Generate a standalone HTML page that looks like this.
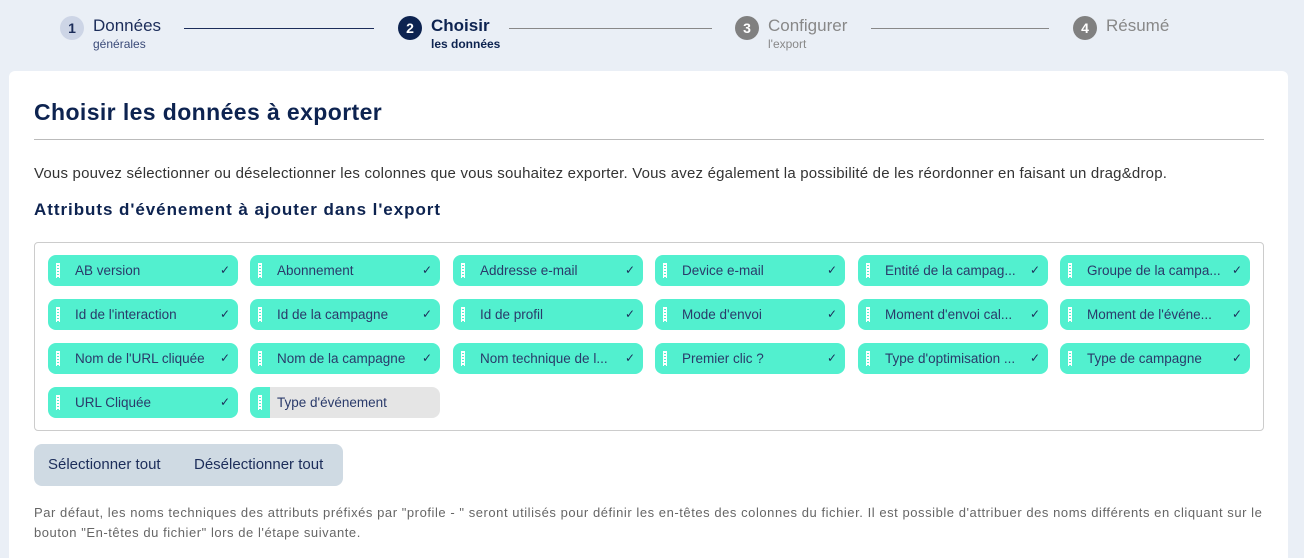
<!DOCTYPE html>
<html style="overflow:hidden"><head><meta charset="utf-8"><style>
*{margin:0;padding:0;box-sizing:border-box}
html,body{width:1304px;height:558px;overflow:hidden}
body{background:#eaeff6;font-family:"Liberation Sans",sans-serif;color:#1c2d5a;position:relative}
.a{position:absolute;white-space:nowrap}
.circ{position:absolute;width:24px;height:24px;border-radius:50%;font-weight:bold;font-size:14px;text-align:center;line-height:24px}
.card{position:absolute;left:9px;top:71px;width:1279px;height:487px;background:#fff;border-radius:6px 6px 0 0}
.chip{position:absolute;width:190px;height:31px;border-radius:8px;background:#52f0cf;font-size:13.5px;color:#2a3a6a;line-height:31px;padding-left:27px;overflow:hidden}
.chip .g{position:absolute;left:8px;top:8px;width:4px;height:15px;background:repeating-linear-gradient(#fff 0 2px,transparent 2px 3px);border-left:1px solid #fff;border-right:1px solid #fff;background-clip:content-box}
.chip .c{position:absolute;right:8px;top:0;font-size:12px;color:#1c2d5a}
.chip.off{background:linear-gradient(90deg,#52f0cf 0 20px,#e5e5e5 20px)}
</style></head><body>
<div class="circ" style="left:60px;top:16px;background:#cdd5e6;color:#1c2d5a">1</div>
<div class="a" style="left:93px;top:16px;font-size:17px;color:#1c2d5a">Données</div>
<div class="a" style="left:93px;top:37px;font-size:12px;color:#3a4a78">générales</div>
<div class="a" style="left:184px;top:28px;width:190px;height:1px;background:#1c2d5a"></div>
<div class="circ" style="left:398px;top:16px;background:#0d2350;color:#fff">2</div>
<div class="a" style="left:431px;top:16px;font-size:17px;font-weight:bold;color:#0d2350">Choisir</div>
<div class="a" style="left:431px;top:37px;font-size:12px;font-weight:bold;color:#0d2350">les données</div>
<div class="a" style="left:509px;top:28px;width:203px;height:1px;background:#888"></div>
<div class="circ" style="left:735px;top:16px;background:#808080;color:#fff">3</div>
<div class="a" style="left:768px;top:16px;font-size:17px;color:#888">Configurer</div>
<div class="a" style="left:768px;top:37px;font-size:12px;color:#888">l'export</div>
<div class="a" style="left:871px;top:28px;width:178px;height:1px;background:#888"></div>
<div class="circ" style="left:1073px;top:16px;background:#808080;color:#fff">4</div>
<div class="a" style="left:1106px;top:16px;font-size:17px;color:#888">Résumé</div>

<div class="card"></div>
<div class="a" style="left:34px;top:99px;font-size:23px;font-weight:bold;color:#0d2350;letter-spacing:0.4px">Choisir les données à exporter</div>
<div class="a" style="left:34px;top:139px;width:1230px;height:1px;background:#bbb"></div>
<div class="a" style="left:34px;top:165px;font-size:15px;color:#333;letter-spacing:0.2px">Vous pouvez sélectionner ou déselectionner les colonnes que vous souhaitez exporter. Vous avez également la possibilité de les réordonner en faisant un drag&amp;drop.</div>
<div class="a" style="left:34px;top:200px;font-size:17px;font-weight:bold;color:#0d2350;letter-spacing:0.95px">Attributs d'événement à ajouter dans l'export</div>
<div class="a" style="left:34px;top:242px;width:1230px;height:189px;border:1px solid #ccc;border-radius:4px"></div>

<div class="chip" style="left:48px;top:255px"><span class="g"></span>AB version<span class="c">✓</span></div>
<div class="chip" style="left:250px;top:255px"><span class="g"></span>Abonnement<span class="c">✓</span></div>
<div class="chip" style="left:453px;top:255px"><span class="g"></span>Addresse e-mail<span class="c">✓</span></div>
<div class="chip" style="left:655px;top:255px"><span class="g"></span>Device e-mail<span class="c">✓</span></div>
<div class="chip" style="left:858px;top:255px"><span class="g"></span>Entité de la campag...<span class="c">✓</span></div>
<div class="chip" style="left:1060px;top:255px"><span class="g"></span>Groupe de la campa...<span class="c">✓</span></div>
<div class="chip" style="left:48px;top:299px"><span class="g"></span>Id de l'interaction<span class="c">✓</span></div>
<div class="chip" style="left:250px;top:299px"><span class="g"></span>Id de la campagne<span class="c">✓</span></div>
<div class="chip" style="left:453px;top:299px"><span class="g"></span>Id de profil<span class="c">✓</span></div>
<div class="chip" style="left:655px;top:299px"><span class="g"></span>Mode d'envoi<span class="c">✓</span></div>
<div class="chip" style="left:858px;top:299px"><span class="g"></span>Moment d'envoi cal...<span class="c">✓</span></div>
<div class="chip" style="left:1060px;top:299px"><span class="g"></span>Moment de l'événe...<span class="c">✓</span></div>
<div class="chip" style="left:48px;top:343px"><span class="g"></span>Nom de l'URL cliquée<span class="c">✓</span></div>
<div class="chip" style="left:250px;top:343px"><span class="g"></span>Nom de la campagne<span class="c">✓</span></div>
<div class="chip" style="left:453px;top:343px"><span class="g"></span>Nom technique de l...<span class="c">✓</span></div>
<div class="chip" style="left:655px;top:343px"><span class="g"></span>Premier clic ?<span class="c">✓</span></div>
<div class="chip" style="left:858px;top:343px"><span class="g"></span>Type d'optimisation ...<span class="c">✓</span></div>
<div class="chip" style="left:1060px;top:343px"><span class="g"></span>Type de campagne<span class="c">✓</span></div>
<div class="chip" style="left:48px;top:387px"><span class="g"></span>URL Cliquée<span class="c">✓</span></div>
<div class="chip off" style="left:250px;top:387px"><span class="g"></span>Type d'événement</div>

<div class="a" style="left:34px;top:444px;width:309px;height:42px;background:#cfdae3;border-radius:8px"></div>
<div class="a" style="left:48px;top:456px;font-size:15px;color:#1c2d5a">Sélectionner tout</div>
<div class="a" style="left:194px;top:456px;font-size:15px;color:#1c2d5a">Désélectionner tout</div>
<div class="a" style="left:34px;top:503px;font-size:13px;color:#666;line-height:20px;letter-spacing:0.55px">Par défaut, les noms techniques des attributs préfixés par "profile - " seront utilisés pour définir les en-têtes des colonnes du fichier. Il est possible d'attribuer des noms différents en cliquant sur le<br>bouton "En-têtes du fichier" lors de l'étape suivante.</div>
</body></html>
